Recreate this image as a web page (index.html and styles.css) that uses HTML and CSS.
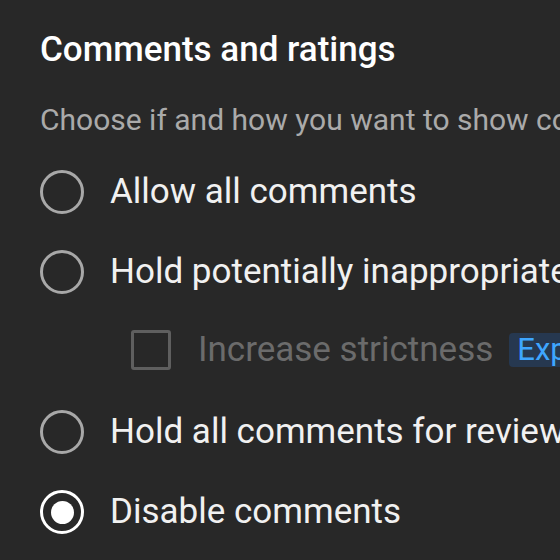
FILE: index.html
```html
<!DOCTYPE html>
<html>
<head>
<meta charset="utf-8">
<link rel="stylesheet" href="styles.css">
</head>
<body>
<section class="panel">
  <h2 class="title">Comments and ratings</h2>
  <p class="subtitle">Choose if and how you want to show comments</p>
  <div class="options">
    <label class="option"><span class="radio"></span><span class="label">Allow all comments</span></label>
    <label class="option"><span class="radio"></span><span class="label">Hold potentially inappropriate comments for review</span></label>
    <label class="option sub"><span class="checkbox"></span><span class="label disabled">Increase strictness</span><span class="badge">Experimental</span></label>
    <label class="option"><span class="radio"></span><span class="label">Hold all comments for review</span></label>
    <label class="option"><span class="radio checked"></span><span class="label">Disable comments</span></label>
  </div>
</section>
</body>
</html>
```
FILE: styles.css
```css
html, body {
  margin: 0;
  background: #282828;
  overflow: hidden;
}
body {
  width: 560px;
  height: 560px;
  font-family: Roboto, "Liberation Sans", sans-serif;
  color: #f1f1f1;
}
.panel {
  width: 520px;
  padding: 29px 0 0 40px;
  white-space: nowrap;
  overflow: hidden;
}
.title {
  margin: 0;
  font-size: 35px;
  font-weight: 500;
  line-height: 42px;
  color: #fff;
}
.subtitle {
  margin: 29px 0 0;
  font-size: 30px;
  line-height: 40px;
  color: #aaa;
}
.options {
  display: flex;
  flex-direction: column;
  margin-top: 12px;
}
.option {
  display: flex;
  align-items: center;
  height: 80px;
  gap: 26px;
}
.option.sub {
  padding-left: 91px;
  padding-bottom: 4px;
  gap: 27px;
  height: 76px;
}
.radio {
  width: 38px;
  height: 38px;
  border: 3px solid #a8a8a8;
  border-radius: 50%;
  flex: none;
  display: flex;
  align-items: center;
  justify-content: center;
}
.radio.checked {
  border-color: #fff;
}
.radio.checked::after {
  content: "";
  width: 23px;
  height: 23px;
  border-radius: 50%;
  background: #fff;
}
.checkbox {
  width: 34px;
  height: 34px;
  border: 3px solid #5f5f5f;
  border-radius: 3px;
  flex: none;
}
.label {
  font-size: 35px;
  line-height: 42px;
}
.label.disabled {
  color: #6b6b6b;
}
.badge {
  margin-left: -11px;
  background: #263850;
  color: #3ea6ff;
  font-size: 31px;
  line-height: 34px;
  padding: 0 8px;
  border-radius: 4px;
}
```
